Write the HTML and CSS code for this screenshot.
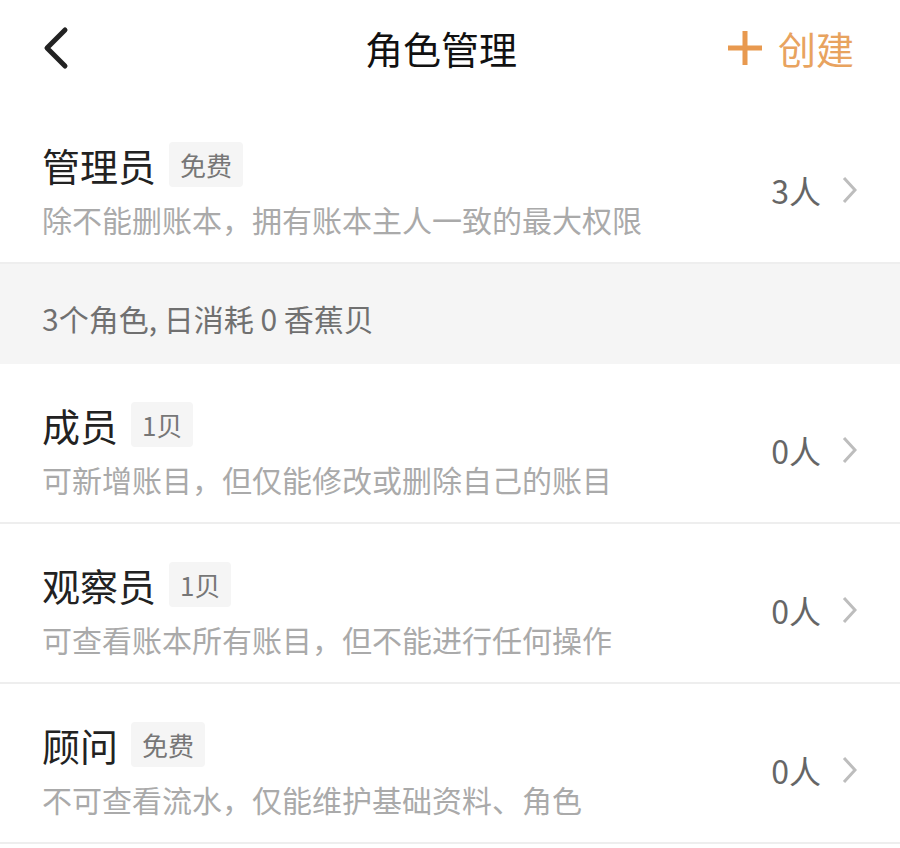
FILE: index.html
```html
<!DOCTYPE html>
<html lang="zh-CN">
<head>
	<meta charset="UTF-8">
	<meta name="viewport" content="width=device-width, initial-scale=1.0">
	<link rel="stylesheet" href="styles.css">
	<title>角色管理</title>
</head>
<body>
	<div class="header">
		<div class="back">
			<svg width="28" height="44" viewBox="0 0 28 44"><polyline points="22,4 4,22 22,40" fill="none" stroke="#222" stroke-width="5" stroke-linecap="round" stroke-linejoin="round"/></svg>
		</div>
		<div class="title">角色管理</div>
		<div class="create">
			<svg width="36" height="36" viewBox="0 0 36 36"><path d="M18 1V35M1 18H35" fill="none" stroke="#e8994f" stroke-width="5"/></svg>
			<span>创建</span>
		</div>
	</div>

	<div class="row">
		<div class="info">
			<div class="name">管理员<span class="tag">免费</span></div>
			<div class="desc">除不能删账本，拥有账本主人一致的最大权限</div>
		</div>
		<div class="count">3人<svg width="16" height="28" viewBox="0 0 16 28"><polyline points="3,2 14,14 3,26" fill="none" stroke="#bdbdbd" stroke-width="3"/></svg></div>
	</div>

	<div class="summary">3个角色, 日消耗 0 香蕉贝</div>

	<div class="row">
		<div class="info">
			<div class="name">成员<span class="tag">1贝</span></div>
			<div class="desc">可新增账目，但仅能修改或删除自己的账目</div>
		</div>
		<div class="count">0人<svg width="16" height="28" viewBox="0 0 16 28"><polyline points="3,2 14,14 3,26" fill="none" stroke="#bdbdbd" stroke-width="3"/></svg></div>
	</div>

	<div class="row">
		<div class="info">
			<div class="name">观察员<span class="tag">1贝</span></div>
			<div class="desc">可查看账本所有账目，但不能进行任何操作</div>
		</div>
		<div class="count">0人<svg width="16" height="28" viewBox="0 0 16 28"><polyline points="3,2 14,14 3,26" fill="none" stroke="#bdbdbd" stroke-width="3"/></svg></div>
	</div>

	<div class="row">
		<div class="info">
			<div class="name">顾问<span class="tag">免费</span></div>
			<div class="desc">不可查看流水，仅能维护基础资料、角色</div>
		</div>
		<div class="count">0人<svg width="16" height="28" viewBox="0 0 16 28"><polyline points="3,2 14,14 3,26" fill="none" stroke="#bdbdbd" stroke-width="3"/></svg></div>
	</div>
</body>
</html>
```

FILE: styles.css
```css
body{
	margin:0;
	background:#fff;
	font-family:"Noto Sans CJK SC", "Noto Sans", sans-serif;
	overflow:hidden;
}
.header{
	height:104px;
	display:grid;
	grid-template-columns:1fr auto 1fr;
	align-items:center;
	padding:0 46px 0 42px;
}
.back{
	display:flex;
	align-items:center;
	padding-left:1px;
	margin-bottom:8px;
}
.title{
	font-size:38px;
	color:#111;
	margin-right:14px;
	margin-bottom:10px;
}
.create{
	display:flex;
	align-items:center;
	justify-content:flex-end;
	gap:15px;
	color:#e8a35f;
	font-size:38px;
	margin-bottom:10px;
}
.create svg{
	margin-top:2px;
}
.row{
	padding:38px 43px 25px 42px;
	display:flex;
	align-items:center;
	justify-content:space-between;
	border-bottom:2px solid #eeeeee;
}
.name{
	display:flex;
	align-items:center;
	font-size:38px;
	line-height:45px;
	color:#222;
}
.tag{
	margin-left:13px;
	padding:0 11px;
	height:45px;
	line-height:45px;
	font-size:26px;
	color:#777;
	background:#f5f5f5;
	border-radius:4px;
}
.desc{
	margin-top:14px;
	font-size:30px;
	line-height:36px;
	color:#aaa;
}
.count{
	display:flex;
	align-items:center;
	gap:20px;
	font-size:32px;
	color:#666;
}
.summary{
	height:100px;
	box-sizing:border-box;
	padding:36px 42px 0;
	background:#f5f5f5;
	font-size:30px;
	line-height:36px;
	color:#707070;
}
```
